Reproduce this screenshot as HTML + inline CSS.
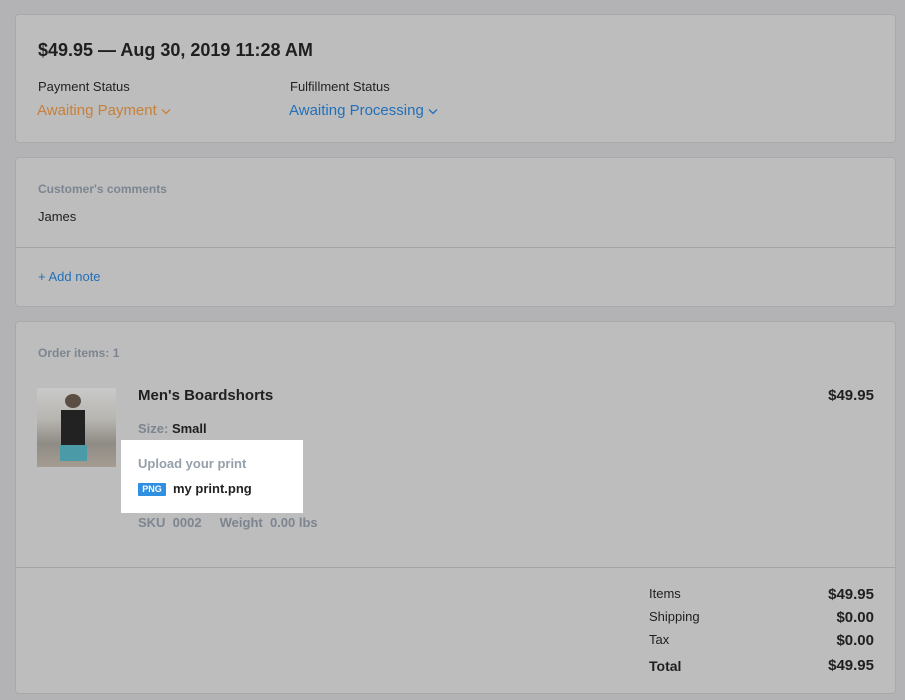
<!DOCTYPE html>
<html><head><meta charset="utf-8"><style>
body{margin:0;width:905px;height:700px;background:#b3b3b5;font-family:"Liberation Sans",sans-serif;position:relative;overflow:hidden;color:#1f1f1f}
.card{position:absolute;left:15px;width:881px;background:#bdbdbd;border:1px solid #a9a9ab;border-radius:4px;box-sizing:border-box}
.t{position:absolute;white-space:nowrap}
.g{color:#7c8590;font-weight:bold;font-size:12px}
.hr{position:absolute;left:0;right:0;height:1px;background:#a4a4a6}
svg{vertical-align:middle}
</style></head><body>
<div class="card" style="top:14px;height:129px">
  <div class="t" style="left:22px;top:25px;font-size:18px;font-weight:bold;color:#1f1f1f">$49.95 — Aug 30, 2019 11:28 AM</div>
  <div class="t" style="left:22px;top:64px;font-size:13px;color:#222">Payment Status</div>
  <div class="t" style="left:274px;top:64px;font-size:13px;color:#222">Fulfillment Status</div>
  <div class="t" style="left:21px;top:87px;font-size:15px;color:#c6803a">Awaiting Payment <svg width="10" height="7" viewBox="0 0 10 7"><path d="M1 1.5 L5 5.5 L9 1.5" fill="none" stroke="#c6803a" stroke-width="1.3"/></svg></div>
  <div class="t" style="left:273px;top:87px;font-size:15px;color:#2270ba">Awaiting Processing <svg width="10" height="7" viewBox="0 0 10 7"><path d="M1 1.5 L5 5.5 L9 1.5" fill="none" stroke="#2270ba" stroke-width="1.3"/></svg></div>
</div>
<div class="card" style="top:157px;height:150px">
  <div class="t g" style="left:22px;top:24px">Customer's comments</div>
  <div class="t" style="left:22px;top:51px;font-size:13px">James</div>
  <div class="hr" style="top:89px"></div>
  <div class="t" style="left:22px;top:111px;font-size:13px;color:#2270ba">+ Add note</div>
</div>
<div class="card" style="top:321px;height:373px">
  <div class="t g" style="left:22px;top:24px">Order items: 1</div>
  <div class="t" style="left:21px;top:66px;width:79px;height:79px;background:linear-gradient(180deg,#c9c9c9 0%,#b7b5b0 40%,#8f8b85 70%,#a49c92 100%);overflow:hidden">
    <div style="position:absolute;left:28px;top:6px;width:16px;height:14px;background:#5b4f44;border-radius:50%"></div>
    <div style="position:absolute;left:24px;top:22px;width:24px;height:36px;background:#222"></div>
    <div style="position:absolute;left:23px;top:57px;width:27px;height:16px;background:#4a9aa8"></div>
  </div>
  <div class="t" style="left:122px;top:65px;font-size:15px;font-weight:bold">Men's Boardshorts</div>
  <div class="t" style="right:21px;top:65px;font-size:15px;font-weight:bold">$49.95</div>
  <div class="t" style="left:122px;top:99px;font-size:13px;font-weight:bold"><span style="color:#7c8590">Size:</span> Small</div>
  <div class="t" style="left:105px;top:118px;width:182px;height:73px;background:#fff"></div>
  <div class="t g" style="left:122px;top:134px;font-size:13px;color:#95a0ab">Upload your print</div>
  <div class="t" style="left:122px;top:161px;width:28px;height:13px;background:#2f8fe0;color:#fff;font-size:9px;font-weight:bold;text-align:center;line-height:13px;border-radius:1px">PNG</div>
  <div class="t" style="left:157px;top:159px;font-size:13px;font-weight:bold;color:#222">my print.png</div>
  <div class="t g" style="left:122px;top:193px;font-size:13px">SKU&nbsp; 0002&nbsp;&nbsp;&nbsp;&nbsp; Weight&nbsp; 0.00 lbs</div>
  <div class="hr" style="top:245px"></div>
  <div class="t" style="left:633px;top:264px;font-size:13px">Items</div>
  <div class="t" style="left:633px;top:287px;font-size:13px">Shipping</div>
  <div class="t" style="left:633px;top:310px;font-size:13px">Tax</div>
  <div class="t" style="left:633px;top:336px;font-size:14px;font-weight:bold">Total</div>
  <div class="t" style="right:21px;top:264px;font-size:15px;font-weight:bold">$49.95</div>
  <div class="t" style="right:21px;top:287px;font-size:15px;font-weight:bold">$0.00</div>
  <div class="t" style="right:21px;top:310px;font-size:15px;font-weight:bold">$0.00</div>
  <div class="t" style="right:21px;top:335px;font-size:15px;font-weight:bold">$49.95</div>
</div>
</body></html>
